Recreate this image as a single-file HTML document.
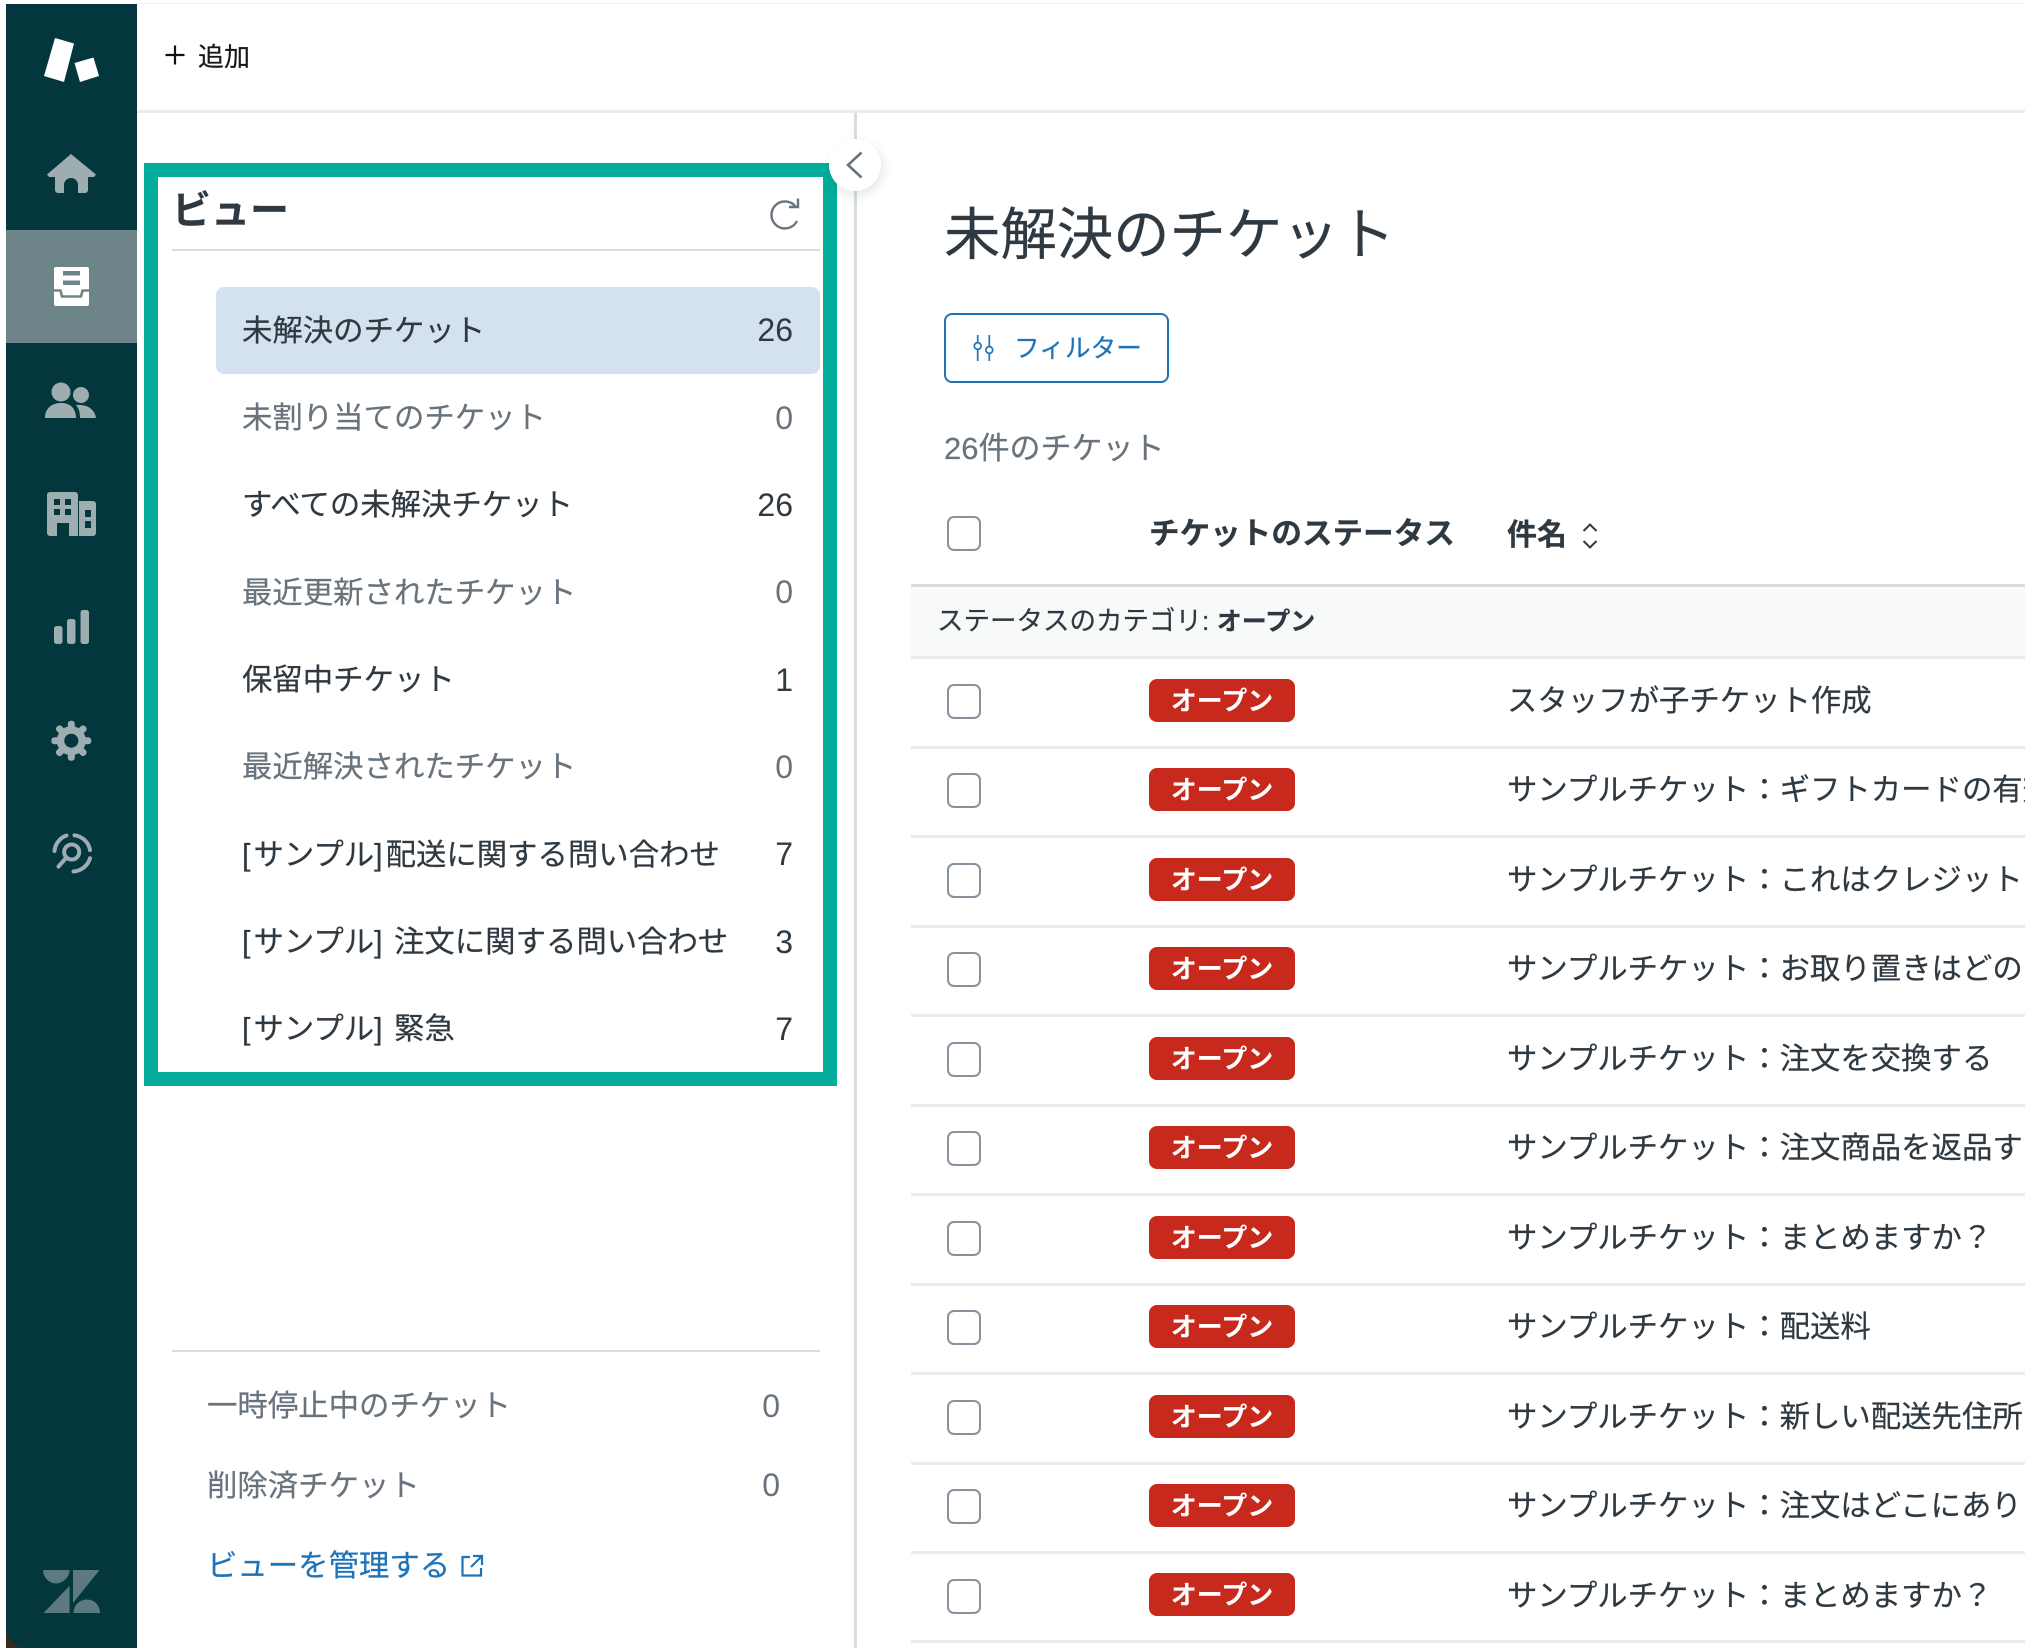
<!DOCTYPE html>
<html lang="ja"><head><meta charset="utf-8"><title>未解決のチケット</title>
<style>
html,body{margin:0;padding:0;background:#fff}
body{position:relative;width:2025px;height:1650px;overflow:hidden;font-family:"Liberation Sans","Noto Sans CJK JP",sans-serif;color:#2f3941}
.a{position:absolute}
.t{position:absolute;white-space:nowrap;line-height:40px;height:40px;font-size:30.4px;-webkit-text-stroke:.2px currentColor}
.g{color:#68737d}
.n{position:absolute;white-space:nowrap;line-height:40px;height:40px;font-size:32px;text-align:right;width:60px;left:733px}
.l{position:absolute;left:911px;width:1114px;height:3px;background:#e9ebed}
.c{position:absolute;left:947px;width:30px;height:31px;border:2px solid #87929d;border-radius:7px;background:#fff}
.b{position:absolute;left:1149px;width:146px;height:43px;background:#c72a1c;border-radius:8px;color:#fff;font-weight:700;font-size:26px;line-height:44px;text-align:center}
.s{position:absolute;left:1507px;white-space:nowrap;line-height:40px;height:40px;font-size:30.4px;-webkit-text-stroke:.2px currentColor}
.k{letter-spacing:3px}
svg{position:absolute;left:0;top:0}
</style></head><body>
<!-- top lines -->
<div class="a" style="left:137px;top:3px;width:1888px;height:1px;background:#f0f1f2"></div>
<div class="a" style="left:137px;top:110px;width:1888px;height:3px;background:#e9ebed"></div>
<!-- sidebar -->
<div class="a" style="left:6px;top:1626px;width:22px;height:22px;background:#3a2a1c"></div>
<div class="a" style="left:6px;top:4px;width:131px;height:1644px;background:#03363d;border-bottom-left-radius:20px"></div>
<div class="a" style="left:6px;top:230px;width:131px;height:113px;background:#6d8588"></div>
<svg width="140" height="1650" viewBox="0 0 140 1650">
<polygon points="55,38 74,43.5 64,82 44,76" fill="#fff"/>
<polygon points="74.5,63 93.5,57.5 99,76 80,82" fill="#fff"/>
<path fill="#9eadb0" d="M71 154 96 174.5 94 177H88V190a3 3 0 0 1-3 3H78V185a7 7 0 0 0-14 0V193H58a3 3 0 0 1-3-3V177H49L47 174.5Z"/>
<path fill="#fff" d="M56 267H87a2 2 0 0 1 2 2V304a2 2 0 0 1-2 2H56a2 2 0 0 1-2-2V269a2 2 0 0 1 2-2Z"/>
<path fill="#6d8588" d="M63 271H80V275.500H63ZM63 280.500H80V285H63Z"/>
<path fill="none" stroke="#6d8588" stroke-width="2.600" d="M53 290.500H60.500L62 296.500H81L82.500 290.500H90"/>
<path fill="#fff" d="M54 293H58V300H54ZM85 293H89V300H85Z"/>
<circle cx="61" cy="392" r="9.5" fill="#9eadb0"/><circle cx="81" cy="395" r="8" fill="#9eadb0"/>
<path fill="#9eadb0" d="M45 418C45 408 52 403 61 403S76 408 76 418ZM76 405C88 404 95 410 96 418H80C80 412 79 409 76 405Z"/>
<path fill="#9eadb0" fill-rule="evenodd" d="M50 492H75a3 3 0 0 1 3 3V536H69V523H57V536H50a3 3 0 0 1-3-3V495a3 3 0 0 1 3-3ZM54 499V505H60V499ZM65 499V505H71V499ZM54 509V515H60V509ZM65 509V515H71V509Z"/>
<path fill="#9eadb0" fill-rule="evenodd" d="M79 501H93a3 3 0 0 1 3 3V533a3 3 0 0 1-3 3H79ZM85 510V517H91V510ZM85 521V528H91V521Z"/>
<rect x="54" y="626" width="8.5" height="18" rx="2.5" fill="#9eadb0"/><rect x="67" y="619" width="8.5" height="25" rx="2.5" fill="#9eadb0"/><rect x="80.5" y="610" width="8.5" height="34" rx="2.5" fill="#9eadb0"/>
<g transform="translate(71.3 740.7)" fill="#9eadb0">
<circle r="14.5"/>
<rect x="-3.5" y="-20" width="7" height="10" rx="3"/>
<rect x="-3.5" y="-20" width="7" height="10" rx="3" transform="rotate(45)"/><rect x="-3.5" y="-20" width="7" height="10" rx="3" transform="rotate(90)"/><rect x="-3.5" y="-20" width="7" height="10" rx="3" transform="rotate(135)"/><rect x="-3.5" y="-20" width="7" height="10" rx="3" transform="rotate(180)"/><rect x="-3.5" y="-20" width="7" height="10" rx="3" transform="rotate(225)"/><rect x="-3.5" y="-20" width="7" height="10" rx="3" transform="rotate(270)"/><rect x="-3.5" y="-20" width="7" height="10" rx="3" transform="rotate(315)"/>
<circle r="7" fill="#03363d"/></g>
<g fill="none" stroke="#9eadb0" stroke-width="4" stroke-linecap="round">
<circle cx="71.700" cy="852" r="7.500"/><path d="M66 858 58.500 866.500"/>
<path d="M54.500 851A18 18 0 0 1 66.500 835.500M74.500 835.300A18 18 0 0 1 90 850M90 858.300A18.500 18.500 0 0 1 73.500 871.500"/>
</g>
<g fill="#5d7a7e">
<path d="M43 1570H69.500C69.500 1578 62 1583.500 56 1583.500S43 1578 43 1570Z"/>
<path d="M69.500 1586V1613H43.500Z"/>
<path d="M73 1570H99.500L73 1603Z"/>
<path d="M73.500 1613C73.500 1605 80 1599.500 87 1599.500S100 1605 100 1613Z"/>
</g>
</svg>
<svg class="a" width="30" height="30" style="left:160px;top:40px" viewBox="0 0 30 30"><path d="M5.500 15H24.500M15 5.500V24.500" stroke="#111" stroke-width="2.200" fill="none"/></svg>
<div class="t" style="left:198px;top:37px;font-size:26px;color:#17191c">追加</div>

<!-- teal frame -->
<div class="a" style="left:144px;top:163px;width:665px;height:895px;border:14px solid #03ab9a;background:#fff"></div>
<div class="t" style="left:172px;top:192px;font-size:39px;font-weight:700">ビュー</div>
<div class="a" style="left:172px;top:249px;width:648px;height:2px;background:#d8dcde"></div>
<svg class="a" width="40" height="40" style="left:765px;top:194px" viewBox="0 0 40 40"><path d="M30.500 12.500A13.500 13.500 0 1 0 32 27" fill="none" stroke="#68737d" stroke-width="2.400"/><path d="M33 4.500V13H24" fill="none" stroke="#68737d" stroke-width="2.400"/></svg>
<div class="a" style="left:215.500px;top:287px;width:604px;height:87px;background:#d4e1ef;border-radius:8px"></div>

<div class="t" style="left:242px;top:311px">未解決のチケット</div><div class="n" style="top:310px">26</div>
<div class="t g" style="left:242px;top:398px">未割り当てのチケット</div><div class="n g" style="top:398px">0</div>
<div class="t" style="left:242px;top:485px">すべての未解決チケット</div><div class="n" style="top:485px">26</div>
<div class="t g" style="left:242px;top:573px">最近更新されたチケット</div><div class="n g" style="top:572px">0</div>
<div class="t" style="left:242px;top:660px">保留中チケット</div><div class="n" style="top:660px">1</div>
<div class="t g" style="left:242px;top:747px">最近解決されたチケット</div><div class="n g" style="top:747px">0</div>
<div class="t" style="left:242px;top:835px"><span class="k">[</span>サンプル<span class="k">]</span>配送に関する問い合わせ</div><div class="n" style="top:834px">7</div>
<div class="t" style="left:242px;top:922px"><span class="k">[</span>サンプル<span class="k">]</span> 注文に関する問い合わせ</div><div class="n" style="top:922px">3</div>
<div class="t" style="left:242px;top:1009px"><span class="k">[</span>サンプル<span class="k">]</span> 緊急</div><div class="n" style="top:1009px">7</div>

<div class="a" style="left:172px;top:1350px;width:648px;height:2px;background:#d8dcde"></div>
<div class="t g" style="left:207px;top:1386px">一時停止中のチケット</div><div class="n g" style="top:1386px;left:720px">0</div>
<div class="t g" style="left:207px;top:1466px">削除済チケット</div><div class="n g" style="top:1465px;left:720px">0</div>
<div class="t" style="left:207px;top:1546px;color:#1f73b7">ビューを管理する</div>
<svg class="a" width="30" height="30" style="left:457px;top:1552px" viewBox="0 0 30 30"><path d="M13 5H5.500V23.500H24V16M16 4H25V13M25 4 14 15" fill="none" stroke="#1f73b7" stroke-width="2.200"/></svg>

<!-- divider + toggle -->
<div class="a" style="left:853.500px;top:113px;width:3px;height:1535px;background:#d8dcde"></div>
<div class="a" style="left:829px;top:139px;width:52px;height:52px;border-radius:50%;background:#fff;box-shadow:2px 4px 10px rgba(4,68,77,.13)"></div>
<svg class="a" width="40" height="40" style="left:840px;top:145px" viewBox="0 0 40 40"><path d="M21.500 8 8 20.500 21.500 33" transform="translate(0 -.5)" fill="none" stroke="#68737d" stroke-width="2.600"/></svg>

<!-- main -->
<div class="t" style="left:944px;top:195px;font-size:56.400px;line-height:80px;height:80px">未解決のチケット</div>
<div class="a" style="left:944px;top:313px;width:221px;height:66px;border:2px solid #1f73b7;border-radius:8px"></div>
<svg class="a" width="30" height="34" style="left:969px;top:331px" viewBox="0 0 30 34"><g fill="none" stroke="#1f73b7" stroke-width="1.700"><path d="M8.700 4V11.500M8.700 18.500V30M20.300 4V15.500M20.300 22.500V30"/><circle cx="8.700" cy="15" r="3.400"/><circle cx="20.300" cy="19" r="3.400"/></g></svg>
<div class="t" style="left:1014px;top:329px;font-size:25.700px;color:#1f73b7">フィルター</div>
<div class="t g" style="left:944px;top:429px;font-size:31px">26件のチケット</div>

<div class="c" style="top:516px"></div>
<div class="t" style="left:1149px;top:514px;font-size:30.600px;font-weight:700">チケットのステータス</div>
<div class="t" style="left:1507px;top:516px;font-size:30px;font-weight:700">件名</div>
<svg class="a" width="24" height="34" style="left:1578px;top:519px" viewBox="0 0 24 34"><path d="M5.500 12 12 5.500 18.500 12M5.500 22 12 28.500 18.500 22" fill="none" stroke="#2f3941" stroke-width="2"/></svg>

<div class="a" style="left:911px;top:587px;width:1114px;height:70px;background:#f8f9f9"></div>
<div class="a" style="left:911px;top:584px;width:1114px;height:3px;background:#d8dcde"></div>
<div class="l" style="top:656px"></div>
<div class="t" style="left:937px;top:601px;font-size:26.500px">ステータスのカテゴリ: <b style="font-size:25px">オープン</b></div>

<div class="c" style="top:684px"></div><div class="b" style="top:679px">オープン</div><div class="s" style="top:681px">スタッフが子チケット作成</div><div class="l" style="top:746px"></div>
<div class="c" style="top:773px"></div><div class="b" style="top:768px">オープン</div><div class="s" style="top:770px">サンプルチケット：ギフトカードの有効期限</div><div class="l" style="top:835px"></div>
<div class="c" style="top:863px"></div><div class="b" style="top:858px">オープン</div><div class="s" style="top:860px">サンプルチケット：これはクレジットカード</div><div class="l" style="top:925px"></div>
<div class="c" style="top:952px"></div><div class="b" style="top:947px">オープン</div><div class="s" style="top:949px">サンプルチケット：お取り置きはどのくらい</div><div class="l" style="top:1014px"></div>
<div class="c" style="top:1042px"></div><div class="b" style="top:1037px">オープン</div><div class="s" style="top:1039px">サンプルチケット：注文を交換する</div><div class="l" style="top:1104px"></div>
<div class="c" style="top:1131px"></div><div class="b" style="top:1126px">オープン</div><div class="s" style="top:1128px">サンプルチケット：注文商品を返品する</div><div class="l" style="top:1193px"></div>
<div class="c" style="top:1221px"></div><div class="b" style="top:1216px">オープン</div><div class="s" style="top:1218px">サンプルチケット：まとめますか？</div><div class="l" style="top:1283px"></div>
<div class="c" style="top:1310px"></div><div class="b" style="top:1305px">オープン</div><div class="s" style="top:1307px">サンプルチケット：配送料</div><div class="l" style="top:1372px"></div>
<div class="c" style="top:1400px"></div><div class="b" style="top:1395px">オープン</div><div class="s" style="top:1397px">サンプルチケット：新しい配送先住所</div><div class="l" style="top:1462px"></div>
<div class="c" style="top:1489px"></div><div class="b" style="top:1484px">オープン</div><div class="s" style="top:1486px">サンプルチケット：注文はどこにありますか</div><div class="l" style="top:1551px"></div>
<div class="c" style="top:1579px"></div><div class="b" style="top:1573px">オープン</div><div class="s" style="top:1576px">サンプルチケット：まとめますか？</div><div class="l" style="top:1640px"></div>
</body></html>
